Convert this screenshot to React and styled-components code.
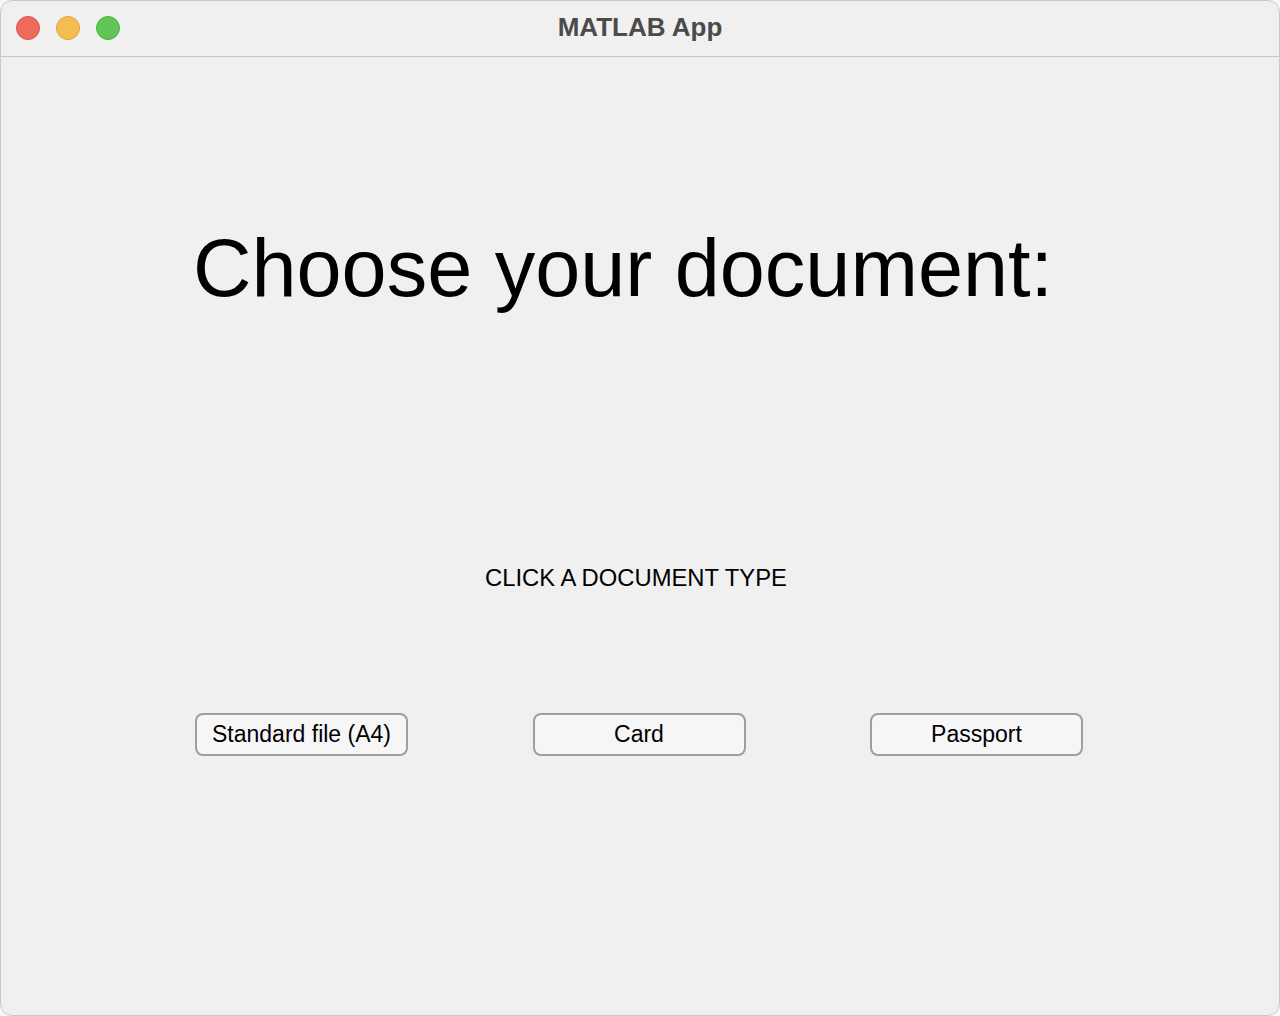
import React from "react";
import styled, { createGlobalStyle } from "styled-components";

const GlobalStyle = createGlobalStyle`
  html, body {
    margin: 0;
    padding: 0;
    background: #f7f7f7;
  }
  * {
    box-sizing: border-box;
  }
`;

const Window = styled.div`
  width: 1280px;
  height: 1016px;
  background-color: #f0f0f0;
  border-radius: 12px;
  overflow: hidden;
  border: 1px solid #c9c9c9;
  display: flex;
  flex-direction: column;
  font-family: "Liberation Sans", Arial, sans-serif;
  color: #000;
`;

const TitleBar = styled.div`
  position: relative;
  height: 56px;
  flex-shrink: 0;
  display: flex;
  align-items: center;
  justify-content: center;
  border-bottom: 1px solid #c6c6c6;
`;

const Lights = styled.div`
  position: absolute;
  left: 15px;
  top: 15px;
  display: flex;
  gap: 16px;
`;

const Light = styled.span`
  width: 24px;
  height: 24px;
  border-radius: 50%;
  background-color: ${(p) => p.color};
  border: 1px solid ${(p) => p.edge};
`;

const Title = styled.div`
  font-size: 26px;
  font-weight: bold;
  color: #4b4b4b;
  margin-top: -2px;
`;

const Content = styled.div`
  padding-left: 194px;
  width: 1082px;
  display: flex;
  flex-direction: column;
`;

const Heading = styled.h1`
  margin: 171px 0 0 -2px;
  font-size: 81px;
  font-weight: normal;
  line-height: 1;
  white-space: nowrap;
`;

const Hint = styled.div`
  margin-top: 257px;
  padding-right: 6px;
  font-size: 23.8px;
  line-height: 1;
  text-align: center;
`;

const ButtonRow = styled.div`
  margin-top: 123px;
  display: flex;
  justify-content: space-between;
`;

const Button = styled.button`
  width: 213px;
  height: 43px;
  background-color: #f6f6f6;
  border: 2px solid #9e9e9e;
  border-radius: 8px;
  font-family: "Liberation Sans", Arial, sans-serif;
  font-size: 23px;
  color: #000;
  padding: 0;
`;

const App = () => {
  return (
    <>
      <GlobalStyle />
      <Window>
        <TitleBar>
          <Lights>
            <Light color="#ee6a5f" edge="#d9534a" />
            <Light color="#f5bd4f" edge="#dea23a" />
            <Light color="#61c554" edge="#4fae43" />
          </Lights>
          <Title>MATLAB App</Title>
        </TitleBar>
        <Content>
          <Heading>Choose your document:</Heading>
          <Hint>CLICK A DOCUMENT TYPE</Hint>
          <ButtonRow>
            <Button>Standard file (A4)</Button>
            <Button>Card</Button>
            <Button>Passport</Button>
          </ButtonRow>
        </Content>
      </Window>
    </>
  );
};

export default App;
